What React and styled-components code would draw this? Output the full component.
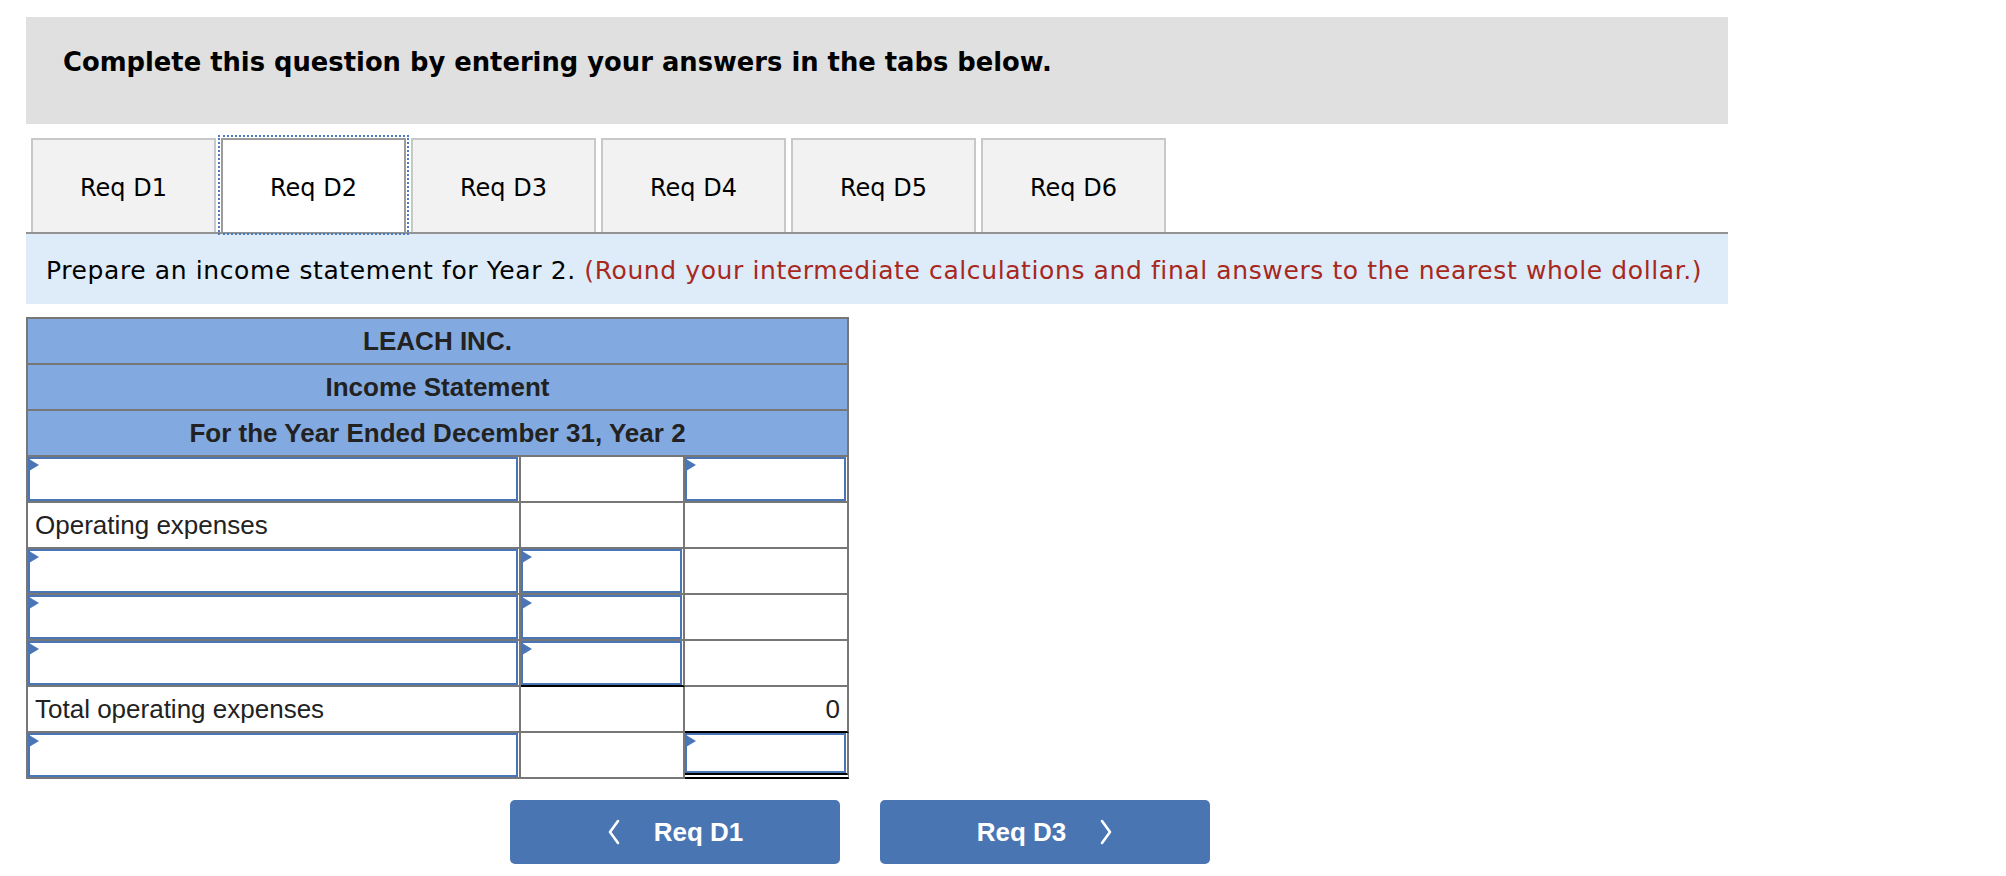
import React from 'react';
import styled, { createGlobalStyle } from 'styled-components';

const GlobalStyle = createGlobalStyle`
  html, body {
    margin: 0;
    padding: 0;
    background: #fff;
  }
  body {
    font-family: "DejaVu Sans", Verdana, sans-serif;
    color: #000;
  }
`;

const tabs = ['Req D1', 'Req D2', 'Req D3', 'Req D4', 'Req D5', 'Req D6'];

// kind: 'label' | 'input' | 'blank' | 'value'
const rows = [
  [{ kind: 'input' }, { kind: 'blank' }, { kind: 'input' }],
  [{ kind: 'label', text: 'Operating expenses' }, { kind: 'blank' }, { kind: 'blank' }],
  [{ kind: 'input' }, { kind: 'input' }, { kind: 'blank' }],
  [{ kind: 'input' }, { kind: 'input' }, { kind: 'blank' }],
  [{ kind: 'input' }, { kind: 'input', rule: 'single' }, { kind: 'blank' }],
  [
    { kind: 'label', text: 'Total operating expenses' },
    { kind: 'blank' },
    { kind: 'value', text: '0', rule: 'single' },
  ],
  [{ kind: 'input' }, { kind: 'blank' }, { kind: 'input', rule: 'double' }],
];

function Chevron({ left }) {
  return (
    <svg width="14" height="26" viewBox="0 0 14 26">
      <polyline
        points={left ? '11,2 3,13 11,24' : '3,2 11,13 3,24'}
        fill="none"
        stroke="#fff"
        strokeWidth="2.6"
        strokeLinecap="round"
        strokeLinejoin="round"
      />
    </svg>
  );
}

export default function App() {
  return (
    <Page>
      <GlobalStyle />
      <Prompt>Complete this question by entering your answers in the tabs below.</Prompt>

      <TabList>
        {tabs.map((t) => (
          <Tab key={t} $active={t === 'Req D2'}>
            {t}
          </Tab>
        ))}
      </TabList>

      <Instructions>
        Prepare an income statement for Year 2.&nbsp;
        <Note>
          (Round your intermediate calculations and final answers to the nearest whole dollar.)
        </Note>
      </Instructions>

      <Statement>
        <TitleRow>LEACH INC.</TitleRow>
        <TitleRow>Income Statement</TitleRow>
        <TitleRow>For the Year Ended December 31, Year 2</TitleRow>
        {rows.map((row, i) =>
          row.map((cell, j) => (
            <Cell
              key={`${i}-${j}`}
              $rule={cell.rule}
              $field={cell.kind === 'input'}
              $align={cell.kind === 'value' ? 'right' : 'left'}
            >
              {cell.kind === 'input' && (
                <>
                  <Field type="text" />
                  <Flag />
                </>
              )}
              {(cell.kind === 'label' || cell.kind === 'value') && cell.text}
            </Cell>
          ))
        )}
      </Statement>

      <Nav>
        <NavButton>
          <Chevron left />
          Req D1
        </NavButton>
        <NavButton>
          Req D3
          <Chevron />
        </NavButton>
      </Nav>
    </Page>
  );
}

const Page = styled.div`
  width: 1702px;
  padding: 17px 0 0 26px;
`;

const Prompt = styled.div`
  height: 107px;
  box-sizing: border-box;
  padding: 28px 0 0 37px;
  background: #e0e0e0;
  font-size: 25.8px;
  line-height: 34px;
  font-weight: bold;
`;

const TabList = styled.div`
  display: flex;
  gap: 5px;
  margin: 14px 0 0 5px;
`;

const Tab = styled.button`
  width: 185px;
  height: 94px;
  box-sizing: border-box;
  padding: 4px 0 0;
  border: 2px solid ${({ $active }) => ($active ? '#9b9b9b' : '#c8c8c8')};
  border-bottom: none;
  background: ${({ $active }) => ($active ? '#fff' : '#f2f2f2')};
  font-family: inherit;
  font-size: 24px;
  color: #000;
  outline: ${({ $active }) => ($active ? '2px dotted #4b7cc2' : 'none')};
  outline-offset: 1px;
`;

const Instructions = styled.div`
  height: 72px;
  box-sizing: border-box;
  display: flex;
  align-items: center;
  padding: 2px 0 0 20px;
  background: #deebf8;
  border-top: 2px solid #939393;
  font-size: 25px;
  letter-spacing: 0.6px;
  white-space: nowrap;
`;

const Note = styled.span`
  color: #a7281f;
`;

const Statement = styled.div`
  display: grid;
  grid-template-columns: 493px 164px 164px;
  grid-auto-rows: 46px;
  width: max-content;
  margin-top: 13px;
  border-left: 2px solid #777;
  border-top: 2px solid #777;
  font-family: "Liberation Sans", Arial, sans-serif;
  font-size: 26px;
  color: #222;
`;

const TitleRow = styled.div`
  grid-column: 1 / -1;
  display: flex;
  align-items: center;
  justify-content: center;
  box-sizing: border-box;
  background: #83aae0;
  border-right: 2px solid #777;
  border-bottom: 2px solid #777;
  font-weight: bold;
`;

const Cell = styled.div`
  position: relative;
  display: flex;
  align-items: center;
  justify-content: ${({ $align }) => ($align === 'right' ? 'flex-end' : 'flex-start')};
  box-sizing: border-box;
  padding: ${({ $field }) => ($field ? '0 1px 0 0' : '0 7px')};
  border-right: 2px solid #777;
  border-bottom: ${({ $rule }) =>
    $rule === 'single' ? '2px solid #000' : $rule === 'double' ? '6px double #000' : '2px solid #777'};
`;

const Field = styled.input`
  width: 100%;
  height: 100%;
  box-sizing: border-box;
  margin: 0;
  padding: 0 8px;
  border: 2px solid #4a76b8;
  background: #fff;
  font: inherit;
  outline: none;
`;

const Flag = styled.span`
  position: absolute;
  left: 1px;
  top: 2px;
  width: 0;
  height: 0;
  border-top: 6.5px solid transparent;
  border-bottom: 6.5px solid transparent;
  border-left: 10px solid #4a76b8;
`;

const Nav = styled.div`
  display: flex;
  gap: 40px;
  margin: 21px 0 0 484px;
`;

const NavButton = styled.button`
  width: 330px;
  height: 64px;
  display: flex;
  align-items: center;
  justify-content: center;
  gap: 33px;
  padding: 0;
  border: none;
  border-radius: 5px;
  background: #4a75b3;
  color: #fff;
  font-family: "Liberation Sans", Arial, sans-serif;
  font-size: 26px;
  font-weight: bold;
`;
